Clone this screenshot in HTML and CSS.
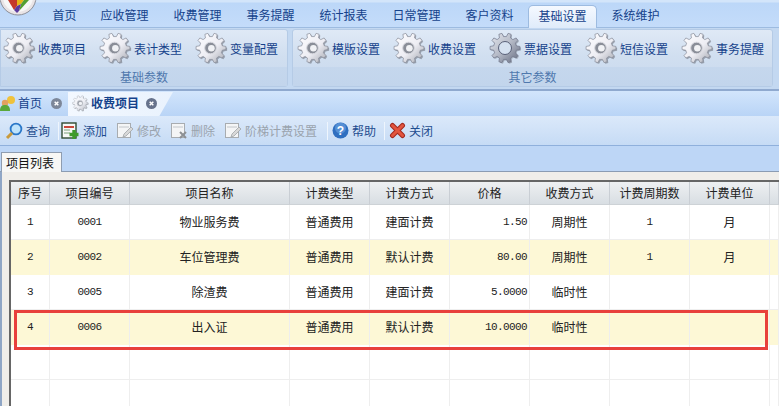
FILE: index.html
```html
<!DOCTYPE html>
<html lang="zh-CN">
<head>
<meta charset="utf-8">
<title>收费项目</title>
<link rel="stylesheet" href="styles.css">
</head>
<body>
<svg class="defs" width="0" height="0">
  <defs>
    <linearGradient id="gearFill" x1="0" y1="0" x2="1" y2="1">
      <stop offset="0" stop-color="#fdfdff"/><stop offset=".55" stop-color="#eeeef4"/><stop offset="1" stop-color="#a2a5ae"/>
    </linearGradient>
    <linearGradient id="gearDark" x1="0" y1="0" x2="1" y2="1">
      <stop offset="0" stop-color="#e6e8ee"/><stop offset=".5" stop-color="#b4b9c6"/><stop offset="1" stop-color="#636a7e"/>
    </linearGradient>
    <polygon id="cog" points="27.29,13.81 30.92,14.43 30.92,17.57 27.29,18.19 26.42,20.86 28.99,23.5 27.15,26.04 23.84,24.41 21.58,26.06 22.10,29.70 19.12,30.67 17.40,27.41 14.60,27.41 12.88,30.67 9.90,29.70 10.42,26.06 8.16,24.41 4.85,26.04 3.01,23.5 5.58,20.86 4.71,18.19 1.08,17.57 1.08,14.43 4.71,13.81 5.58,11.14 3.01,8.5 4.85,5.96 8.16,7.59 10.42,5.94 9.90,2.30 12.88,1.33 14.60,4.59 17.40,4.59 19.12,1.33 22.10,2.30 21.58,5.94 23.84,7.59 27.15,5.96 28.99,8.5 26.42,11.14"/>
    <symbol id="gear" viewBox="0 0 33 33">
      <use href="#cog" x="1.2" y="1.2" fill="#4f535c" opacity=".45"/>
      <use href="#cog" fill="url(#gearFill)" stroke="#878b98" stroke-width=".7"/>
      <circle cx="15.500" cy="16" r="5.800" fill="#8a8e98" stroke="#d6d7de" stroke-width="1"/>
      <circle cx="16.400" cy="16.300" r="3.300" fill="#f1f2f5"/>
    </symbol>
    <symbol id="gear-dark" viewBox="0 0 33 33">
      <use href="#cog" x="1" y="1" fill="#4f535c" opacity=".35"/>
      <use href="#cog" fill="url(#gearDark)" stroke="#70768a" stroke-width=".7"/>
      <circle cx="16" cy="16" r="6.500" fill="#d5e1f0" stroke="#596077" stroke-width="1"/>
    </symbol>
    <symbol id="doc" viewBox="0 0 18 18">
      <rect x="1.500" y="1.500" width="13" height="14" fill="#f4f5f6" stroke="#a8acb0"/>
      <path d="M3 5h10" stroke="#c2c6ca"/>
      <path d="M7 15l1-3 7-7 2 2-7 7z" fill="#d8d8d8" stroke="#a0a4a8" stroke-width=".8"/>
    </symbol>
  </defs>
</svg>

<header class="nav">
  <div class="logo"><svg width="46" height="23" viewBox="0 0 46 23"><circle cx="18" cy="-3" r="18" fill="#e9e4e6" stroke="#8c8f98"/><circle cx="18" cy="-3" r="15" fill="#f7f7f7"/><path d="M8 0h9v6l-3 4z" fill="#c5392b"/><path d="M17 0h7l-3 4-4 2z" fill="#e7b418"/><path d="M24 0h5l-10 11 2-7z" fill="#54a032"/><path d="M14 10l3-4 4-2-2 7-2 2z" fill="#5c3a9e"/></svg></div>
  <nav class="nav-tabs">
    <span class="nav-tab">首页</span><span class="nav-tab">应收管理</span><span class="nav-tab">收费管理</span><span class="nav-tab">事务提醒</span><span class="nav-tab">统计报表</span><span class="nav-tab">日常管理</span><span class="nav-tab">客户资料</span><span class="nav-tab active">基础设置</span><span class="nav-tab">系统维护</span>
  </nav>
</header>

<section class="ribbon">
  <div class="group group-a">
    <div class="group-items">
      <div class="big-btn"><svg class="gear"><use href="#gear"/></svg><span>收费项目</span></div>
      <div class="big-btn"><svg class="gear"><use href="#gear"/></svg><span>表计类型</span></div>
      <div class="big-btn"><svg class="gear"><use href="#gear"/></svg><span>变量配置</span></div>
    </div>
    <div class="group-label">基础参数</div>
  </div>
  <div class="group group-b">
    <div class="group-items">
      <div class="big-btn"><svg class="gear"><use href="#gear"/></svg><span>模版设置</span></div>
      <div class="big-btn"><svg class="gear"><use href="#gear"/></svg><span>收费设置</span></div>
      <div class="big-btn"><svg class="gear"><use href="#gear-dark"/></svg><span>票据设置</span></div>
      <div class="big-btn"><svg class="gear"><use href="#gear"/></svg><span>短信设置</span></div>
      <div class="big-btn"><svg class="gear"><use href="#gear"/></svg><span>事务提醒</span></div>
    </div>
    <div class="group-label">其它参数</div>
  </div>
</section>

<section class="doc-tabs">
  <div class="doc-tab">
    <svg class="doc-icon" width="18" height="18" viewBox="0 0 18 18"><circle cx="11" cy="6" r="4" fill="#f0c23c"/><circle cx="5" cy="9" r="3.200" fill="#e2a060"/><path d="M0 17c0-5 2-6 5-6s5 1 5 6z" fill="#5aa83a"/></svg>
    <span>首页</span>
    <svg class="close" viewBox="0 0 12 12"><circle cx="6" cy="6" r="6" fill="#7d8799"/><path d="M4 4l4 4M8 4l-4 4" stroke="#fff" stroke-width="1.600"/></svg>
  </div>
  <div class="doc-tab active">
    <svg class="small-gear"><use href="#gear"/></svg>
    <span>收费项目</span>
    <svg class="close" viewBox="0 0 12 12"><circle cx="6" cy="6" r="6" fill="#66728c"/><path d="M4 4l4 4M8 4l-4 4" stroke="#fff" stroke-width="1.600"/></svg>
  </div>
</section>

<section class="toolbar">
  <div class="tool"><svg width="18" height="18" viewBox="0 0 18 18"><circle cx="11" cy="7" r="5.400" fill="#bfe3fb" stroke="#2a77c8" stroke-width="1.800"/><path d="M7 11l-5 5" stroke="#c99a3c" stroke-width="3"/></svg><span>查询</span></div>
  <i class="sep"></i>
  <div class="tool"><svg width="19" height="18" viewBox="0 0 19 18"><rect x="1" y="1" width="14" height="15" fill="#f6f8f6" stroke="#2f4a32" stroke-width="1.400"/><path d="M3 5h10" stroke="#c9483a" stroke-width="2"/><path d="M3 8h6M3 11h6" stroke="#7aa07a"/><path d="M13 8v9M8.500 12.500h9" stroke="#3e9b2c" stroke-width="3.400"/></svg><span>添加</span></div>
  <div class="tool off"><svg width="18" height="18"><use href="#doc"/></svg><span>修改</span></div>
  <div class="tool off"><svg width="18" height="18" viewBox="0 0 18 18"><rect x="1.500" y="1.500" width="13" height="14" fill="#f4f5f6" stroke="#a8acb0"/><path d="M3 5h10" stroke="#c2c6ca"/><path d="M10 10l6 6M16 10l-6 6" stroke="#8d9094" stroke-width="2"/></svg><span>删除</span></div>
  <div class="tool off tool-long"><svg width="18" height="18"><use href="#doc"/></svg><span>阶梯计费设置</span></div>
  <i class="sep sep-wide"></i>
  <div class="tool"><svg width="17" height="17" viewBox="0 0 17 17"><circle cx="8.500" cy="8.500" r="8" fill="#2f6fc0"/><circle cx="8.500" cy="6" r="5.500" fill="#6fa5e2" opacity=".6"/><text class="q" x="8.500" y="13" text-anchor="middle">?</text></svg><span>帮助</span></div>
  <i class="sep sep-wide"></i>
  <div class="tool"><svg width="17" height="17" viewBox="0 0 17 17"><path d="M3.500 3.500l10 10M13.500 3.500l-10 10" stroke="#a3291e" stroke-width="5" stroke-linecap="round"/><path d="M3.500 3.500l10 10M13.500 3.500l-10 10" stroke="#e2553f" stroke-width="3" stroke-linecap="round"/></svg><span>关闭</span></div>
</section>

<section class="list-tabs"><div class="list-tab">项目列表</div></section>

<main class="panel">
  <div class="grid">
    <div class="row head">
      <div>序号</div><div>项目编号</div><div>项目名称</div><div>计费类型</div><div>计费方式</div><div>价格</div><div>收费方式</div><div>计费周期数</div><div>计费单位</div><div></div>
    </div>
    <div class="row">
      <div class="num">1</div><div class="num">0001</div><div>物业服务费</div><div>普通费用</div><div>建面计费</div><div class="num price">1.50</div><div>周期性</div><div class="num">1</div><div>月</div><div></div>
    </div>
    <div class="row alt">
      <div class="num">2</div><div class="num">0002</div><div>车位管理费</div><div>普通费用</div><div>默认计费</div><div class="num price">80.00</div><div>周期性</div><div class="num">1</div><div>月</div><div></div>
    </div>
    <div class="row">
      <div class="num">3</div><div class="num">0005</div><div>除渣费</div><div>普通费用</div><div>建面计费</div><div class="num price">5.0000</div><div>临时性</div><div></div><div></div><div></div>
    </div>
    <div class="row alt">
      <div class="num">4</div><div class="num">0006</div><div>出入证</div><div>普通费用</div><div>默认计费</div><div class="num price">10.0000</div><div>临时性</div><div></div><div></div><div></div>
    </div>
    <div class="row"><div></div><div></div><div></div><div></div><div></div><div></div><div></div><div></div><div></div><div></div></div>
    <div class="row"><div></div><div></div><div></div><div></div><div></div><div></div><div></div><div></div><div></div><div></div></div>
    <div class="highlight"></div>
  </div>
</main>
</body>
</html>
```

FILE: styles.css
```css
* { box-sizing: border-box; }
html, body { margin: 0; height: 406px; overflow: hidden; }
body {
  width: 779px;
  background: #f0eeea;
  font: 12px/16px "Noto Sans CJK SC", "Liberation Sans", sans-serif;
  color: #222;
  position: relative;
}
.defs { position: absolute; }
svg { display: block; flex: none; }

/* top navigation */
.nav {
  height: 28px;
  background: linear-gradient(#d3e5fa 0, #d3e5fa 2px, #bcd7f8 3px, #c4dcfa 100%);
  border-bottom: 1px solid #9dbbe0;
  position: relative;
  padding-left: 41px;
}
.logo { position: absolute; left: 0; top: 0; }
.nav-tabs { display: flex; padding-top: 6px; }
.nav-tab {
  flex: none;
  width: 73px;
  height: 21px;
  text-align: center;
  color: #15428b;
  line-height: 18px;
}
.nav-tab:first-child { width: 47px; }
.nav-tab.active {
  background: linear-gradient(#f5f9ff, #dfebfa);
  border: 1px solid #9dbbe0;
  border-bottom: 0;
  border-radius: 5px 5px 0 0;
  margin: -1px 2px 0;
  height: 23px;
  padding-top: 1px;
  width: 69px;
}

/* ribbon */
.ribbon {
  height: 63px;
  display: flex;
  gap: 4px;
  background: #c3d8f1;
  padding-top: 1px;
  border-bottom: 2px solid #8fa9cf;
}
.group {
  height: 58px;
  background: linear-gradient(#dfe9f6 0, #d1dff0 45%, #c8d9ee 100%);
  border: 1px solid #b5cbe6;
  border-radius: 0 3px 3px 0;
  display: flex;
  flex-direction: column;
}
.group-a { width: 288px; }
.group-b { width: 481px; border-radius: 3px; }
.group-items { height: 42px; display: flex; }
.group-a .group-items { padding-left: 2px; }
.group-b .group-items { padding-left: 4px; }
.big-btn { flex: none; width: 96px; display: flex; align-items: center; gap: 2px; color: #15428b; white-space: nowrap; }
.gear { width: 33px; height: 33px; }
.group-label {
  flex: 1;
  background: linear-gradient(#c5d7ed, #c2d5ec);
  color: #4f78ad;
  text-align: center;
  line-height: 19px;
}

/* document tabs */
.doc-tabs {
  height: 25px;
  display: flex;
  background: linear-gradient(#d2e5fc, #b9d4f6);
  padding-top: 1px;
}
.doc-tab { display: flex; align-items: center; height: 24px; padding-bottom: 2px; color: #15428b; flex: none; }
.doc-tab:first-child { width: 68px; }
.doc-tab:first-child .close { margin-left: 9px; }
.doc-tab.active {
  width: 105px;
  background: linear-gradient(100deg, #f3f8ff 0, #e9f2fd 100%);
  clip-path: polygon(0 0, 100% 0, 87% 100%, 0 100%);
  font-weight: 700;
  padding-left: 4px;
  gap: 2px;
}
.doc-tab.active .close { margin-left: 5px; }
.small-gear { width: 17px; height: 17px; opacity: .8; }
.close { width: 11px; height: 11px; }

/* toolbar */
.toolbar {
  height: 30px;
  display: flex;
  align-items: center;
  padding-left: 5px;
  background: linear-gradient(#dbe9fa, #c6dbf5);
  border-bottom: 1px solid #8fb0dc;
  color: #1f4d8f;
}
.tool { display: flex; align-items: center; gap: 3px; margin-right: 9px; white-space: nowrap; }
.tool-long { margin-right: 11px; }
.tool.off { color: #9aa3ad; }
.sep { flex: none; width: 1px; height: 18px; background: #eef5fd; margin: 0 2px 0 -1px; }
.sep-wide { margin-right: 4px; }
.q { font: 700 12px "Liberation Sans", sans-serif; fill: #fff; }

/* list tab strip */
.list-tabs {
  height: 26px;
  background: #bdd6f6;
  border-bottom: 1px solid #8b9cb3;
  padding: 6px 0 0 1px;
}
.list-tab {
  width: 61px;
  height: 20px;
  background: #f7f7f5;
  border: 1px solid #8f9db0;
  border-bottom: 0;
  color: #111;
  line-height: 19px;
  text-align: center;
  padding-right: 3px;
}

/* grid */
.panel {
  height: 234px;
  padding: 8px 0 0 7px;
  border-left: 2px solid #8fa6c6;
  background: #f0eeea;
}
.grid {
  position: relative;
  width: 770px;
  background: #fff;
  border-top: 2px solid #666;
  border-left: 2px solid #666;
  height: 230px;
}
.row { display: grid; grid-template-columns: 39px 80px 160px 80px 80px 80px 80px 80px 80px 1fr; height: 35px; }
.row > div {
  display: flex; align-items: center; justify-content: center;
  border-right: 1px solid #eeeeee;
  border-bottom: 1px solid #eeeeee;
  color: #222;
}
.row.head { height: 23px; background: linear-gradient(#eef0f2, #d7dde2); }
.row.head > div { border-right: 1px solid #c9ced4; border-bottom: 1px solid #cdd2d6; }
.row.alt { background: #fdf8d6; }
.row.alt > div { border-bottom-color: #fdf8d6; }
.row > .num { font: 11px/14px "Liberation Mono", monospace; letter-spacing: -.6px; }
.row > .price { justify-content: flex-end; padding-right: 2px; }
.highlight {
  position: absolute;
  left: 3px;
  top: 128px;
  width: 754px;
  height: 40px;
  border: 3px solid #e8403c;
}
```
